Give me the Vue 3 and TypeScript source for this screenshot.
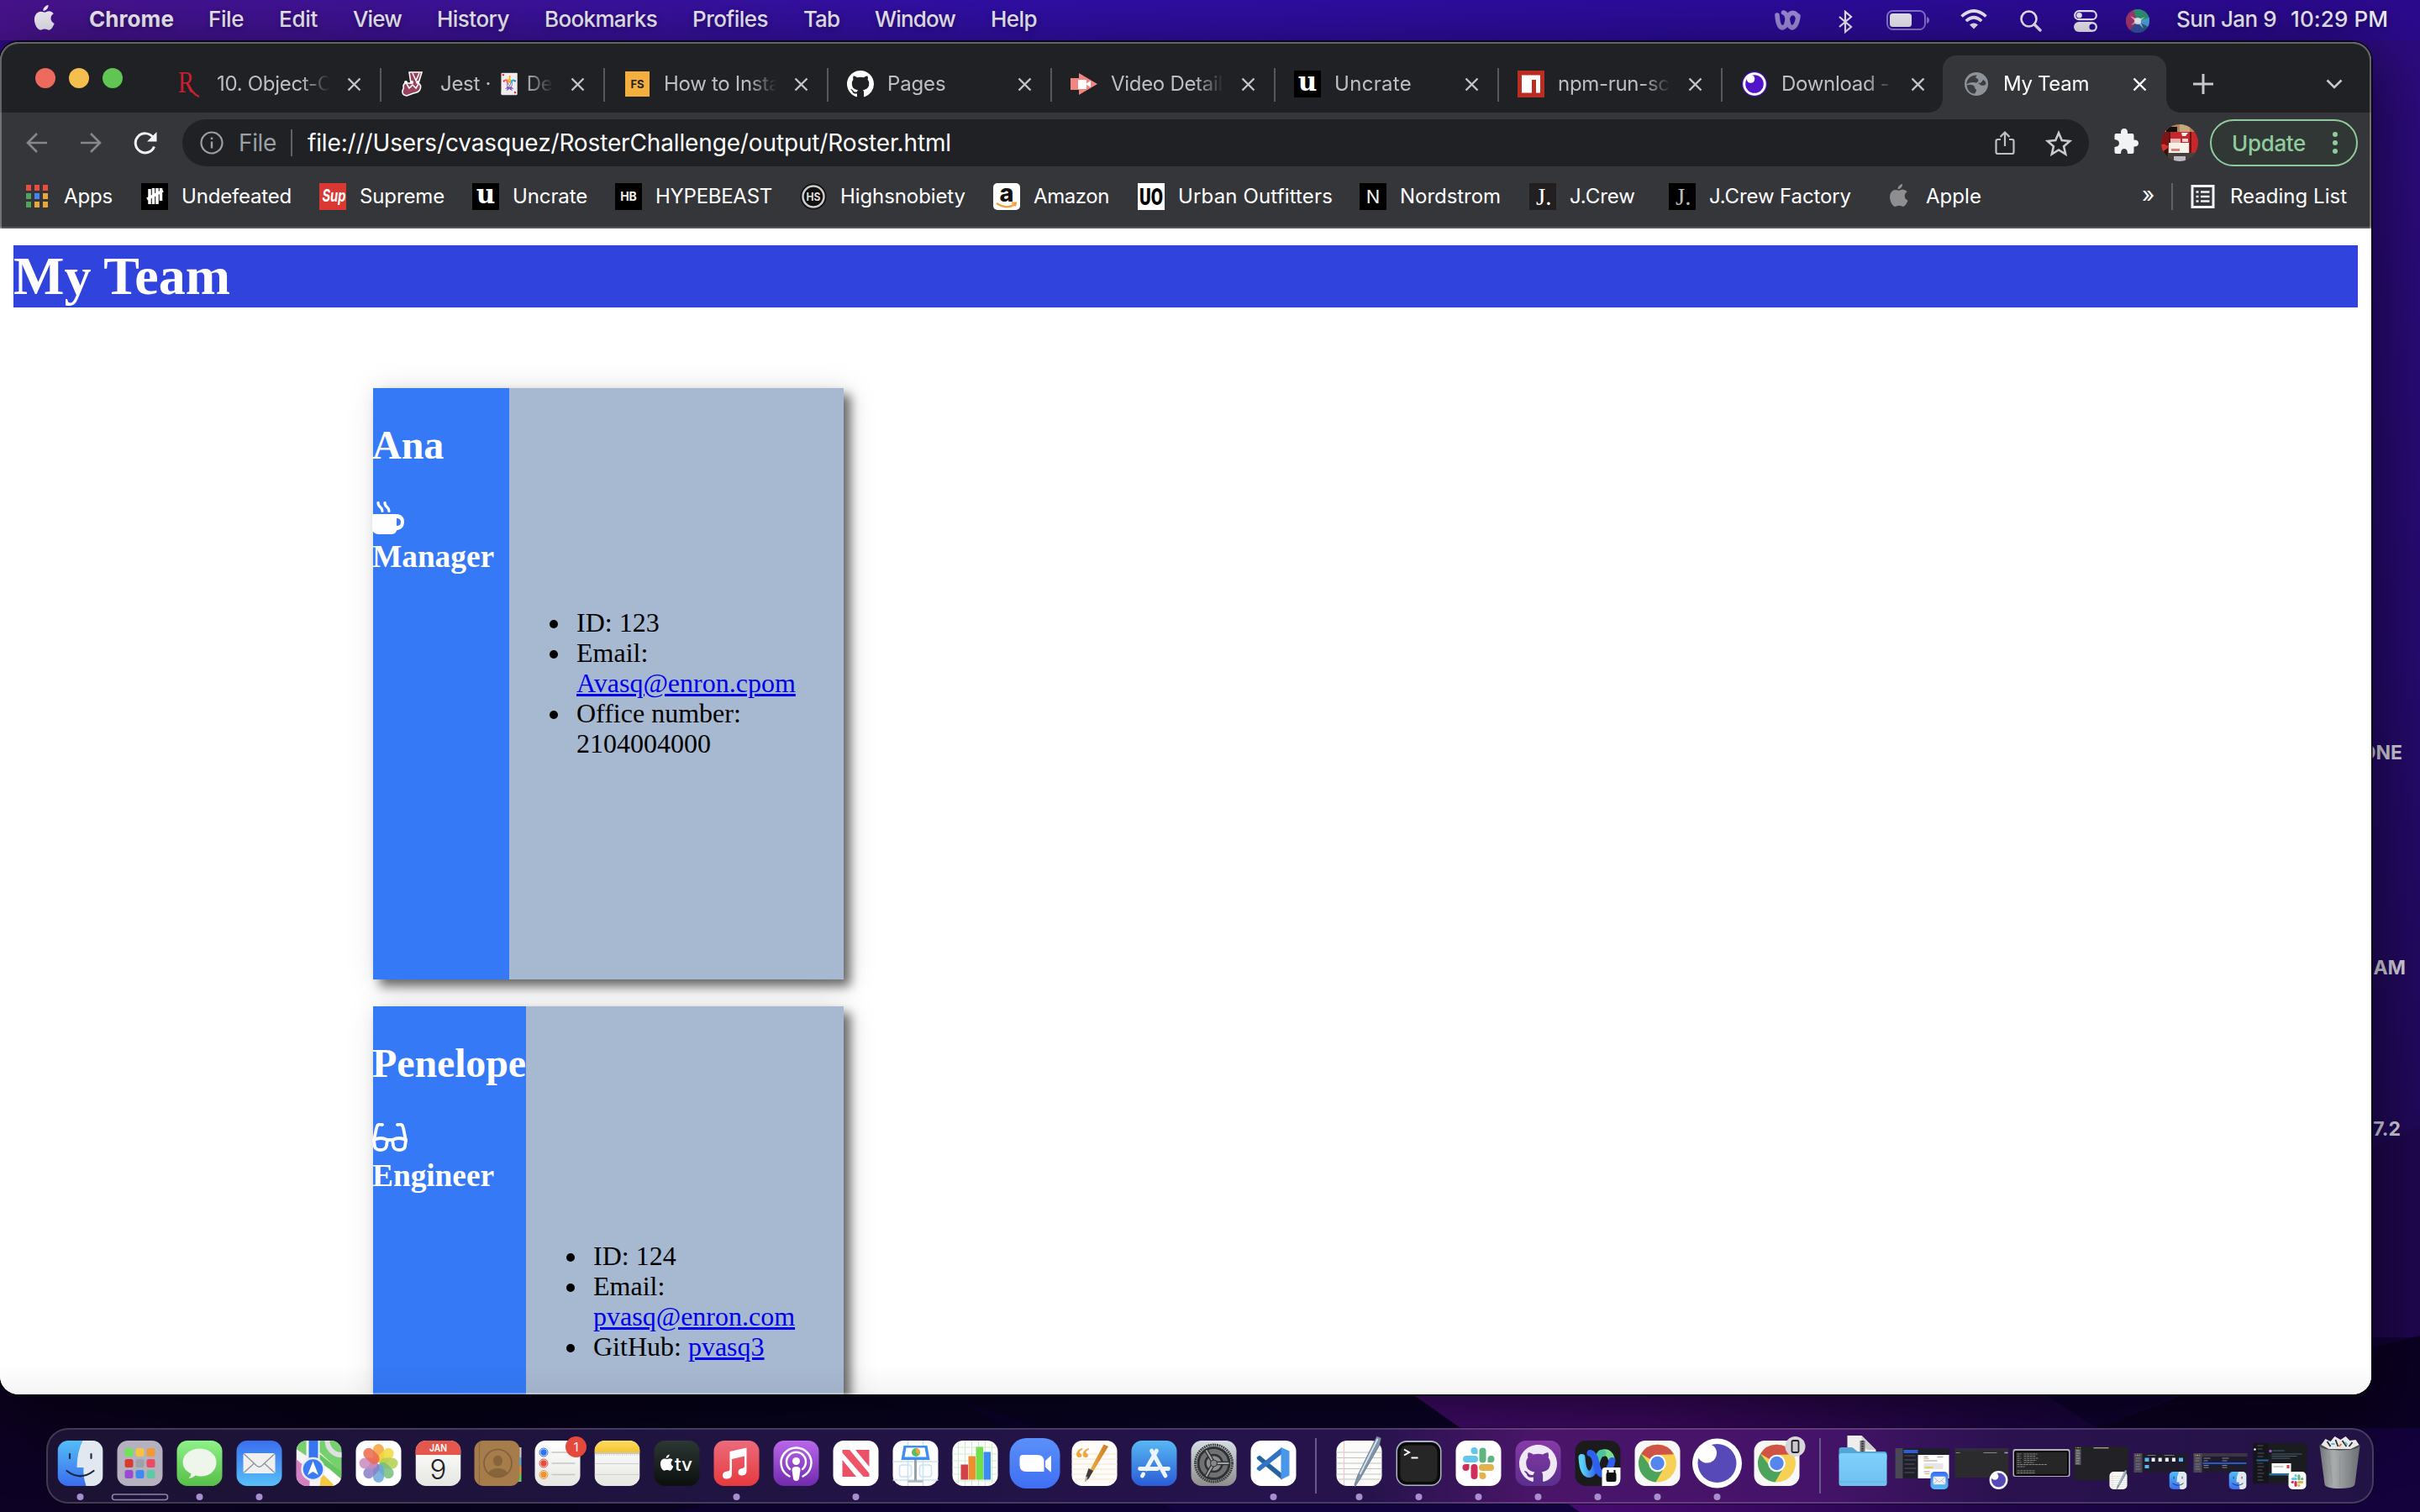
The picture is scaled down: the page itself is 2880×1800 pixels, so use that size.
<script setup lang="ts">
interface Label { text: string; width: number }
interface Tab { icon: string; title: string; width?: number; active?: boolean; last?: boolean }
interface Bookmark { icon: string; text: string; width: number; cell: number }
interface DockItem { icon?: string; dot?: boolean; separator?: boolean; tile?: boolean }
interface Glyph { text: string; attrs: Record<string, string | number> }

// Spreads the letters so that a label takes exactly the given width.
const vFit = {
  mounted(el: HTMLElement, binding: { value?: number }) {
    if (!binding.value) return
    const count = (el.textContent ?? '').length
    const natural = el.getBoundingClientRect().width
    el.style.letterSpacing = `${(binding.value - natural) / count}px`
  },
}

const menus: Label[] = [
  { text: 'File', width: 42 },
  { text: 'Edit', width: 46 },
  { text: 'View', width: 58 },
  { text: 'History', width: 86 },
  { text: 'Bookmarks', width: 134 },
  { text: 'Profiles', width: 90 },
  { text: 'Tab', width: 43 },
  { text: 'Window', width: 96 },
  { text: 'Help', width: 55 },
]

const tabs: Tab[] = [
  { icon: 'rutgers', title: '10. Object-Oriented' },
  { icon: 'jest', title: 'Jest · 🃏 Delightful' },
  { icon: 'fs', title: 'How to Install Node' },
  { icon: 'github', title: 'Pages', width: 68 },
  { icon: 'video', title: 'Video Details' },
  { icon: 'uncrate', title: 'Uncrate', width: 90 },
  { icon: 'npm', title: 'npm-run-script' },
  { icon: 'insomnia-tab', title: 'Download - Ins', last: true },
  { icon: 'globe', title: 'My Team', width: 100, active: true },
]

const bookmarks: Bookmark[] = [
  { icon: 'apps', text: 'Apps', width: 58, cell: 140 },
  { icon: 'undefeated', text: 'Undefeated', width: 131, cell: 212 },
  { icon: 'supreme', text: 'Supreme', width: 101, cell: 182 },
  { icon: 'uncrate', text: 'Uncrate', width: 89, cell: 170 },
  { icon: 'hypebeast', text: 'HYPEBEAST', width: 139, cell: 220 },
  { icon: 'highsnobiety', text: 'Highsnobiety', width: 149, cell: 230 },
  { icon: 'amazon', text: 'Amazon', width: 90, cell: 172 },
  { icon: 'urban', text: 'Urban Outfitters', width: 184, cell: 264 },
  { icon: 'nordstrom', text: 'Nordstrom', width: 120, cell: 202 },
  { icon: 'jcrew', text: 'J.Crew', width: 78, cell: 166 },
  { icon: 'jcrew-factory', text: 'J.Crew Factory', width: 169, cell: 258 },
  { icon: 'apple-mark', text: 'Apple', width: 66, cell: 305 },
]

const dock: DockItem[] = [
  { icon: 'finder', dot: true },
  { icon: 'launchpad' },
  { icon: 'messages', dot: true },
  { icon: 'mail', dot: true },
  { icon: 'maps' },
  { icon: 'photos' },
  { icon: 'calendar' },
  { icon: 'contacts' },
  { icon: 'reminders' },
  { icon: 'notes' },
  { icon: 'tv' },
  { icon: 'music', dot: true },
  { icon: 'podcasts' },
  { icon: 'news', dot: true },
  { icon: 'keynote' },
  { icon: 'numbers' },
  { icon: 'zoom' },
  { icon: 'pages' },
  { icon: 'appstore' },
  { icon: 'settings' },
  { icon: 'vscode', dot: true },
  { separator: true },
  { icon: 'textedit', dot: true },
  { icon: 'terminal', dot: true },
  { icon: 'slack', dot: true },
  { icon: 'github-desktop', dot: true },
  { icon: 'webex', dot: true },
  { icon: 'chrome', dot: true },
  { icon: 'insomnia', dot: true },
  { icon: 'chrome-device' },
  { separator: true },
  { icon: 'folder' },
  { icon: 'win-mail', tile: true },
  { icon: 'win-insomnia', tile: true },
  { icon: 'win-terminal', tile: true },
  { icon: 'win-textedit', tile: true },
  { icon: 'win-finder', tile: true },
  { icon: 'win-finder-list', tile: true },
  { icon: 'win-slack', tile: true },
  { icon: 'trash' },
]

// Lettering that sits on top of an icon, in the icon's own coordinates.
const mid = { 'text-anchor': 'middle' }
const sans = { 'font-family': 'Inter' }
const serif = { 'font-family': 'Liberation Serif' }
const stretch = { lengthAdjust: 'spacingAndGlyphs' }
const glyphs: Record<string, Glyph[]> = {
  rutgers: [{ text: 'R', attrs: { ...serif, ...stretch, x: 2, y: 26, 'font-size': 35, fill: '#c8202f', textLength: 19 } }],
  fs: [{ text: 'FS', attrs: { ...sans, ...mid, x: 16.5, y: 21, 'font-weight': 700, 'font-size': 13, fill: '#222' } }],
  uncrate: [{ text: 'u', attrs: { ...mid, 'font-family': 'DejaVu Serif', x: 16, y: 24, 'font-weight': 700, 'font-size': 31, fill: '#fff' } }],
  supreme: [{ text: 'Sup', attrs: { ...sans, ...stretch, x: 3.5, y: 22, 'font-style': 'italic', 'font-weight': 700, 'font-size': 20, fill: '#fff', textLength: 28 } }],
  hypebeast: [{ text: 'HB', attrs: { ...sans, ...mid, x: 16, y: 21, 'font-weight': 700, 'font-size': 14, fill: '#eee' } }],
  highsnobiety: [{ text: 'HS', attrs: { ...sans, ...mid, ...stretch, x: 16, y: 21, 'font-weight': 700, 'font-size': 13, fill: '#ddd', textLength: 17 } }],
  amazon: [{ text: 'a', attrs: { ...sans, ...mid, ...stretch, x: 16, y: 22, 'font-weight': 800, 'font-size': 29, fill: '#111', textLength: 17 } }],
  urban: [{ text: 'UO', attrs: { ...stretch, 'font-family': 'Roboto', x: 2, y: 26, 'font-weight': 900, 'font-size': 28, fill: '#000', textLength: 28 } }],
  nordstrom: [{ text: 'N', attrs: { ...sans, ...mid, x: 16, y: 24, 'font-size': 22, fill: '#eee' } }],
  jcrew: [{ text: 'J.', attrs: { ...serif, x: 8, y: 26, 'font-size': 29, fill: '#fff' } }],
  'jcrew-factory': [{ text: 'J.', attrs: { ...serif, x: 8, y: 26, 'font-size': 29, fill: '#bbb' } }],
  calendar: [
    { text: 'JAN', attrs: { ...sans, ...mid, ...stretch, x: 27, y: 13, 'font-weight': 600, 'font-size': 11.5, fill: '#fff', textLength: 21 } },
    { text: '9', attrs: { ...sans, ...mid, x: 27, y: 46, 'font-weight': 300, 'font-size': 33, fill: '#222' } },
  ],
  reminders: [{ text: '1', attrs: { ...sans, ...mid, x: 49, y: 12.5, 'font-size': 14, fill: '#fff' } }],
  tv: [{ text: 'tv', attrs: { ...sans, ...stretch, x: 24.5, y: 36, 'font-weight': 500, 'font-size': 22, fill: '#fff', textLength: 21 } }],
  pages: [{ text: '“', attrs: { ...serif, x: 4, y: 33, 'font-weight': 700, 'font-size': 35, fill: '#efa53c' } }],
}

const petals = ['#f4a43c', '#f2d93b', '#b4cf4e', '#76bf7c', '#6aa7dc', '#8b7fc6', '#c98ac0', '#ec6a4e']
const gridColors = ['#6fe35a', '#f6c344', '#ee9a3a', '#d93a30', '#9aa2aa', '#ec4a62', '#9a4bd4', '#3b8bf2', '#5cc9a7']
const fileRows = [0, 1, 2, 3, 4, 5]
</script>

<template>
  <svg class="paints" width="0" height="0" aria-hidden="true">
    <defs>
      <linearGradient id="gFinder" x2="0" y2="1"><stop stop-color="#53bdf6" /><stop offset="1" stop-color="#3a6df0" /></linearGradient>
      <linearGradient id="gGreen" x2="0" y2="1"><stop stop-color="#8df288" /><stop offset="1" stop-color="#57bf48" /></linearGradient>
      <linearGradient id="gMail" x2="0" y2="1"><stop stop-color="#3a6fee" /><stop offset="1" stop-color="#58bff8" /></linearGradient>
      <linearGradient id="gWhite" x2="0" y2="1"><stop stop-color="#fff" /><stop offset="1" stop-color="#e6e6e2" /></linearGradient>
      <linearGradient id="gMusic" x2="0" y2="1"><stop stop-color="#ec6b7d" /><stop offset="1" stop-color="#e63a3c" /></linearGradient>
      <linearGradient id="gPod" x2="0" y2="1"><stop stop-color="#ba67ea" /><stop offset="1" stop-color="#702aac" /></linearGradient>
      <linearGradient id="gZoom" x2="0" y2="1"><stop stop-color="#5a90fa" /><stop offset="1" stop-color="#3f6ff2" /></linearGradient>
      <linearGradient id="gStore" x2="0" y2="1"><stop stop-color="#57b8f3" /><stop offset="1" stop-color="#2a5bd6" /></linearGradient>
      <linearGradient id="gTv" x2="0" y2="1"><stop stop-color="#2c3733" /><stop offset="1" stop-color="#0b0f0e" /></linearGradient>
      <linearGradient id="gSet" x2="0" y2="1"><stop stop-color="#d5dfe5" /><stop offset="1" stop-color="#8d8d8b" /></linearGradient>
      <linearGradient id="gGh" x2="0" y2="1"><stop stop-color="#873aa6" /><stop offset="1" stop-color="#5a2f8c" /></linearGradient>
      <linearGradient id="gFolder" x2="0" y2="1"><stop stop-color="#7fd0fb" /><stop offset="1" stop-color="#6fc0f0" /></linearGradient>
      <linearGradient id="gTrash"><stop stop-color="#6f7476" /><stop offset=".35" stop-color="#a9adae" /><stop offset="1" stop-color="#6a6e72" /></linearGradient>
      <linearGradient id="gYellow" x2="0" y2="1"><stop stop-color="#fbdc62" /><stop offset="1" stop-color="#f6c431" /></linearGradient>
      <linearGradient id="gPencil"><stop stop-color="#f3b44a" /><stop offset="1" stop-color="#c97a22" /></linearGradient>
      <linearGradient id="gWebex"><stop stop-color="#5bd3f4" /><stop offset="1" stop-color="#2f62ee" /></linearGradient>
      <clipPath id="cIcon"><rect width="54" height="54" rx="12.500" /></clipPath>
      <clipPath id="cAvatar"><circle cx="22" cy="22" r="22" /></clipPath>
      <clipPath id="cSiri"><circle cx="14" cy="14" r="14" /></clipPath>
    </defs>
  </svg>

  <svg class="sprite" aria-hidden="true">
    <symbol id="apple" viewBox="0 0 24 30">
      <path d="M16.4 0c.3 3.2-2.5 6.900-5.900 6.700C10.100 3.600 13.100.4 16.400 0zM12.300 8.400c1 0 2.800-1.400 5-1.300 1.700.1 3.800.9 5.100 2.900-4.700 3-3.900 9.300.9 11.200-.9 2.500-3.500 7.600-6.300 7.600-1.900 0-2.600-1.100-4.800-1.100-2.200 0-3 1.100-4.800 1.100C4 28.900.3 22.600.3 16.800c0-5.900 3.700-9.300 7.300-9.300 2.100 0 3.800.9 4.700.9z" />
    </symbol>
    <symbol id="octocat" viewBox="0 0 16 16">
      <path d="M8 0C3.580 0 0 3.580 0 8c0 3.540 2.290 6.530 5.470 7.590.4.070.550-.170.550-.380 0-.190-.010-.820-.010-1.490-2.010.370-2.530-.490-2.690-.940-.090-.230-.480-.940-.820-1.130-.280-.150-.680-.520-.010-.530.630-.010 1.080.580 1.230.820.720 1.210 1.870.870 2.330.660.070-.520.280-.870.510-1.070-1.780-.200-3.640-.890-3.640-3.950 0-.870.310-1.590.820-2.150-.080-.200-.360-1.020.080-2.120 0 0 .670-.210 2.200.820.640-.180 1.320-.270 2-.270s1.360.090 2 .270c1.530-1.040 2.200-.820 2.200-.820.440 1.100.160 1.920.080 2.120.510.560.820 1.270.820 2.150 0 3.070-1.870 3.750-3.650 3.950.290.250.540.730.540 1.480 0 1.070-.010 1.930-.010 2.200 0 .210.150.460.550.380A8.010 8.010 0 0 0 16 8c0-4.420-3.580-8-8-8z" />
    </symbol>

    <!-- favicons, 32 x 32 -->
    <symbol id="rutgers" viewBox="0 0 32 32"><path d="M14 16q5 12 13 15" stroke="#c8202f" stroke-width="2.200" fill="none" /></symbol>
    <symbol id="jest" viewBox="0 0 32 32"><path d="M11 2h15l-4 13q4 3 2 7-1 4-8 5l-8 3q-6-1-5-6 2-3 1-6 1-4 5-3l4 0z" fill="#99425b" stroke="#fff" stroke-width="1.600" /><path d="M15 3l4 9 4-9M8 16l3 5 4-4 4 4 3-5" fill="none" stroke="#fff" stroke-width="1.500" /><g fill="#fff"><circle cx="7" cy="14" r="2" /><circle cx="14" cy="14" r="2" /><circle cx="21" cy="14" r="2" /></g></symbol>
    <symbol id="fs" viewBox="0 0 32 32"><rect x="2" y="1" width="29" height="30" fill="#f3ae3d" /></symbol>
    <symbol id="github" viewBox="0 0 32 32"><use href="#octocat" width="32" height="32" fill="#fff" /></symbol>
    <symbol id="video" viewBox="0 0 32 32"><path d="M0 9h10V3l22 13-22 13v-6H0z" fill="#f08582" /><rect x="9" y="11" width="10" height="11" fill="#fff" /><path d="M18 16l6-4v8z" fill="#fff" /></symbol>
    <symbol id="uncrate" viewBox="0 0 32 32"><rect width="32" height="32" fill="#000" /></symbol>
    <symbol id="npm" viewBox="0 0 32 32"><rect width="32" height="32" fill="#bb2d22" /><path d="M5 5.500h22v21h-5v-15.500h-5v15.500H5z" fill="#fff" /></symbol>
    <symbol id="insomnia-tab" viewBox="0 0 32 32"><circle cx="16" cy="16" r="15" fill="#4a12c9" /><circle cx="16" cy="16" r="13.800" fill="#fff" /><circle cx="16" cy="16" r="10.800" fill="#5214c8" /><circle cx="11.500" cy="10" r="4.800" fill="#fff" /></symbol>
    <symbol id="globe" viewBox="0 0 32 32"><circle cx="16" cy="16" r="14" fill="#8d9398" /><path d="M17 5.500c-3 2-1.500 4 1 4.500 1 2 0 4-2 4.500-4-1-8-1-11.500 2C4 11 9 5 17 5.500zM4.600 17.500c4-1.500 9-.5 9.400 2.500 0 2 2.500 2 2 4-.5 1.500-1.500 2-1.500 3.500C9 28 5 23 4.600 17.500zM27.500 16c-2 2.500-6 2.500-8-.2l-2-.8 4-.5c1-.5 1-2.500 3-3.500 2 1.500 3 3 3 5z" fill="#3c3d41" /></symbol>
    <symbol id="apps" viewBox="0 0 32 32"><rect x="3" y="2" width="6" height="7" fill="#ea4d3d" /><rect x="13" y="2" width="6" height="7" fill="#ea4d3d" /><rect x="23" y="2" width="6" height="7" fill="#ea4d3d" /><rect x="3" y="12" width="6" height="7" fill="#4fa35b" /><rect x="13" y="12" width="6" height="7" fill="#4385f3" /><rect x="23" y="12" width="6" height="7" fill="#eaa637" /><rect x="3" y="22" width="6" height="7" fill="#4fa35b" /><rect x="13" y="22" width="6" height="7" fill="#eaa637" /><rect x="23" y="22" width="6" height="7" fill="#eaa637" /></symbol>
    <symbol id="undefeated" viewBox="0 0 32 32"><rect width="32" height="32" fill="#000" /><path d="M10 7v18M14.500 6v19M19 6v19M23.500 6v15M7 19L26 9" stroke="#fff" stroke-width="3.500" /></symbol>
    <symbol id="supreme" viewBox="0 0 32 32"><rect width="32" height="32" fill="#da3832" /></symbol>
    <symbol id="hypebeast" viewBox="0 0 32 32"><rect width="32" height="32" fill="#000" /></symbol>
    <symbol id="highsnobiety" viewBox="0 0 32 32"><circle cx="16" cy="16" r="15.500" fill="#111" /><circle cx="16" cy="16" r="12.500" fill="#111" stroke="#ccc" stroke-width="2.500" /></symbol>
    <symbol id="amazon" viewBox="0 0 32 32"><rect width="32" height="32" rx="5" fill="#fff" /><path d="M4 24q12 8 22 1M22 23.500l5 0-1 4" fill="none" stroke="#f3a13b" stroke-width="2.200" /></symbol>
    <symbol id="urban" viewBox="0 0 32 32"><rect width="32" height="32" fill="#fff" /></symbol>
    <symbol id="nordstrom" viewBox="0 0 32 32"><rect width="32" height="32" fill="#000" /></symbol>
    <symbol id="jcrew" viewBox="0 0 32 32"><rect width="32" height="32" fill="#221f20" /></symbol>
    <symbol id="jcrew-factory" viewBox="0 0 32 32"><rect width="32" height="32" fill="#000" /></symbol>
    <symbol id="apple-mark" viewBox="0 0 32 32"><use href="#apple" x="4" y="1" width="24" height="28" fill="#8e8e90" /></symbol>

    <!-- dock icons, 54 x 54 -->
    <symbol id="finder" viewBox="0 0 54 54"><g clip-path="url(#cIcon)"><rect width="54" height="54" fill="url(#gFinder)" /><path d="M30 0q-7 14-7 32h8q-1 10 3 22h20V0z" fill="#e2e8f0" /></g><path d="M14.500 16v5M40 16v5" stroke="#20304a" stroke-width="2.200" stroke-linecap="round" /><path d="M11 36q16 12.500 32 0" fill="none" stroke="#1b2740" stroke-width="2.200" stroke-linecap="round" /></symbol>
    <symbol id="launchpad" viewBox="0 0 54 54"><rect width="54" height="54" rx="12.500" fill="#b5b1bf" /><rect v-for="(c, i) in gridColors" :key="c" :x="9 + (i % 3) * 13" :y="9 + Math.floor(i / 3) * 13" width="10" height="10" rx="2.500" :fill="c" /></symbol>
    <symbol id="messages" viewBox="0 0 54 54"><rect width="54" height="54" rx="12.500" fill="url(#gGreen)" /><path d="M27 9.500c11 0 20 7 20 16.500s-8 16.500-18 16.500c-3 0-5-.5-7-1q-3 3-8 3.500 3-2.500 3-5.500Q7 34.500 7 26C7 16.500 16 9.500 27 9.500z" fill="#eef6ec" /></symbol>
    <symbol id="mail" viewBox="0 0 54 54"><rect width="54" height="54" rx="12.500" fill="url(#gMail)" /><rect x="8" y="15" width="38" height="24" rx="2.500" fill="#f0f0f0" /><path d="M9 16l15 14q3 2.500 6 0l15-14M9 38l12-11M45 38L33 27" fill="none" stroke="#8d9196" stroke-width="1.300" /></symbol>
    <symbol id="maps" viewBox="0 0 54 54"><g clip-path="url(#cIcon)"><rect width="54" height="54" fill="#f4f4f4" /><path d="M0 0h12v18L0 10zM28 0h26v38L28 14z" fill="#77d06e" /><path d="M0 22l16 14v18H0z" fill="#d680c4" /><path d="M28 24l26 24v6H28z" fill="#fff" /><path d="M30 38l16 16H28z" fill="#f4c83f" /><path d="M40 34l14 12v-9L28 16v10z" fill="#66c65f" /><rect x="15" width="11" height="30" fill="#3575ef" /><circle cx="54" cy="0" r="17" fill="none" stroke="#dfe0e2" stroke-width="6" /></g><circle cx="20" cy="34" r="13" fill="#3b7bf5" stroke="#e9ecf3" stroke-width="2.500" /><path d="M20 24.500l6.500 16.500-6.500-4-6.500 4z" fill="#fff" /></symbol>
    <symbol id="photos" viewBox="0 0 54 54"><rect width="54" height="54" rx="12.500" fill="#fff" /><rect v-for="(c, i) in petals" :key="c" x="20.500" y="4" width="13" height="22" rx="6.500" :fill="c" fill-opacity=".86" :transform="`rotate(${i * 45} 27 27)`" /></symbol>
    <symbol id="calendar" viewBox="0 0 54 54"><g clip-path="url(#cIcon)"><rect width="54" height="54" fill="url(#gWhite)" /><rect width="54" height="17" fill="#e4574c" /></g></symbol>
    <symbol id="contacts" viewBox="0 0 54 54"><rect x="49" y="8" width="6" height="12" fill="#c7c7c7" /><rect x="49" y="20" width="6" height="10" fill="#4ba9e6" /><rect x="49" y="30" width="6" height="9" fill="#ef8d2e" /><rect x="49" y="39" width="6" height="10" fill="#64c85a" /><rect x="-1" width="54" height="54" rx="11" fill="#a67c4b" /><path d="M5 1v52" stroke="#8f683b" stroke-width="1.200" /><circle cx="27" cy="27" r="16.500" fill="none" stroke="#84603a" stroke-width="1.700" /><ellipse cx="27" cy="24" rx="5.500" ry="6.500" fill="#88643b" /><path d="M15.500 38.500q3-5.500 11.500-5.500t11.500 5.500Q34 43.500 27 43.500t-11.500-5z" fill="#88643b" /></symbol>
    <symbol id="reminders" viewBox="0 0 54 54"><rect width="54" height="54" rx="12.500" fill="url(#gWhite)" /><path d="M20 14h28M20 27h28M20 40.500h28" stroke="#c6c6c6" stroke-width="1.300" /><circle cx="10.500" cy="14" r="3.700" fill="#2f72ea" /><circle cx="10.500" cy="27" r="3.700" fill="#e34b40" /><circle cx="10.500" cy="40.500" r="3.700" fill="#ee9331" /><g fill="none" stroke-width="1"><circle cx="10.500" cy="14" r="5" stroke="#2f72ea" /><circle cx="10.500" cy="27" r="5" stroke="#e34b40" /><circle cx="10.500" cy="40.500" r="5" stroke="#ee9331" /></g><circle cx="49" cy="7.500" r="12.500" fill="#e5493b" /></symbol>
    <symbol id="notes" viewBox="0 0 54 54"><g clip-path="url(#cIcon)"><rect width="54" height="54" fill="url(#gWhite)" /><rect width="54" height="14" fill="url(#gYellow)" /><path d="M0 15h54" stroke="#9a9a8e" stroke-width="1.200" /><path d="M0 17h54" stroke="#bbb" stroke-width="1.200" stroke-dasharray="1 1.500" /><path d="M0 27.500h54M0 40.500h54" stroke="#cfcfcb" stroke-width="1.200" /></g></symbol>
    <symbol id="tv" viewBox="0 0 54 54"><rect width="54" height="54" rx="12.500" fill="url(#gTv)" /><use href="#apple" x="7" y="16.500" width="16.500" height="20" fill="#fff" /></symbol>
    <symbol id="music" viewBox="0 0 54 54"><rect width="54" height="54" rx="12.500" fill="url(#gMusic)" /><path d="M19 13l20-4.500V36q0 5-5 5.500t-5-4q0-4 5-4.500 2.500-.5 2.500-2V18.500l-15 3.500v18q0 5-5.500 5.500t-5.500-4q0-4.500 5.500-5 3-.5 3-2.500z" fill="#fff" /></symbol>
    <symbol id="podcasts" viewBox="0 0 54 54"><rect width="54" height="54" rx="12.500" fill="url(#gPod)" /><g fill="none" stroke="#fff" stroke-width="2.500" stroke-linecap="round"><path d="M19 42.500a18 18 0 1 1 16 0" /><path d="M19.500 34a11.500 11.500 0 1 1 15 0" /></g><circle cx="27" cy="24.500" r="4.500" fill="#fff" /><path d="M27 31q5 0 5 4l-1.500 10q-.5 3-3.500 3t-3.500-3L22 35q0-4 5-4z" fill="#fff" /></symbol>
    <symbol id="news" viewBox="0 0 54 54"><rect width="54" height="54" rx="12.500" fill="#fff" /><path d="M26.500 11H43v20zM11 23v20h16.500z" fill="#ea5066" /><path d="M11 11h8.500L43 39v4h-7L11 14.500z" fill="#ee5568" /></symbol>
    <symbol id="keynote" viewBox="0 0 54 54"><rect width="54" height="54" rx="12.500" fill="#fdfdfd" /><g fill="none" stroke="#cbe2f2" stroke-width="1.500"><rect x="8" y="29" width="14" height="14" rx="3" /><rect x="32" y="29" width="14" height="14" rx="3" /><path d="M0 25h54M0 47h54M18 0v54M36 0v54" /></g><path d="M13 6h28l3 17H10z" fill="#3d8df2" /><path d="M16 8.500h22l2 11H14z" fill="#fff" /><circle cx="27.500" cy="14" r="5" fill="#5bbf5f" /><path d="M27.500 14V9a5 5 0 0 1 4 8z" fill="#f1a33c" /><path d="M27 23v25" stroke="#98a0a8" stroke-width="3" /><path d="M18 48.500h18" stroke="#b2b7bc" stroke-width="2.500" /></symbol>
    <symbol id="numbers" viewBox="0 0 54 54"><rect width="54" height="54" rx="12.500" fill="#fff" /><path d="M7 3v48M15 0v54M23 0v54M31 0v54M39 0v54M47 3v48M3 8h48M0 16h54M0 24h54M0 32h54M0 40h54M3 48h48" stroke="#cfeccb" stroke-width="1.200" /><rect x="10" y="28.500" width="8.500" height="18" fill="#d2404a" /><rect x="19" y="18.500" width="8.500" height="28" fill="#ee8e31" /><rect x="28" y="7.500" width="8.500" height="39" fill="#6fe04b" /><rect x="37" y="13.500" width="8.500" height="33" fill="#3a8bf2" /></symbol>
    <symbol id="zoom" viewBox="0 0 54 54"><rect x="-3" y="-3" width="60" height="60" rx="20" fill="url(#gZoom)" /><path d="M12 17h17q8 0 8 8v12H16q-8 0-8-8v-8q0-4 4-4z" fill="#fff" transform="translate(1)" /><path d="M40 24l6-5.500v18.500l-6-5.500z" fill="#fff" stroke="#fff" stroke-linejoin="round" /></symbol>
    <symbol id="pages" viewBox="0 0 54 54"><rect width="54" height="54" rx="12.500" fill="#fefdfb" /><path d="M0 16h54M0 22h54M0 28h54M0 34h54M0 40h54M3 46h48" stroke="#f7e3c4" stroke-width="1" /><path d="M38 4.500l5.500 2.500L24 39l-5 1z" fill="url(#gPencil)" /><path d="M20 33l5.500 3-5 9-5 4 1.500-7z" fill="#3d3b3c" /><path d="M18 43l-2 6" stroke="#bbb" stroke-width="2" /></symbol>
    <symbol id="appstore" viewBox="0 0 54 54"><rect width="54" height="54" rx="12.500" fill="url(#gStore)" /><g stroke="#eef5fd" stroke-width="4.800" stroke-linecap="round"><path d="M30 12L17.500 34M24 12l16.500 30M10 33.500h21M38 33.500h6M14 40l-1 2" /></g></symbol>
    <symbol id="settings" viewBox="0 0 54 54"><rect width="54" height="54" rx="12.500" fill="url(#gSet)" /><circle cx="27" cy="27" r="22" fill="none" stroke="#3b3d3f" stroke-width="3" stroke-dasharray="1.800 .8" /><circle cx="27" cy="27" r="18.500" fill="#6f7173" stroke="#2f3133" stroke-width="3" /><circle cx="27" cy="27" r="10" fill="#8d8f91" stroke="#2f3133" stroke-width="2.500" /><path d="M27 27h18M27 27l-9-15.500M27 27l-9 15.500" stroke="#2f3133" stroke-width="4.600" /><path d="M27 27h18M27 27l-9-15.500M27 27l-9 15.500" stroke="#a2a4a6" stroke-width="2" /><circle cx="27" cy="27" r="4" fill="#85878a" stroke="#2f3133" /></symbol>
    <symbol id="vscode" viewBox="0 0 54 54"><rect width="54" height="54" rx="12.500" fill="#fff" /><path d="M7 20l3.500-2.500L37 39v7.500L7.500 22z" fill="#2562a0" /><path d="M7 34l3.500 2.500L37 16V8L7.500 32z" fill="#3273c4" /><path d="M36 8l10 4.500v29L36 46.500z" fill="#4a96e8" /></symbol>
    <symbol id="textedit" viewBox="0 0 54 54"><rect width="54" height="54" rx="12.500" fill="#fbfbf9" /><path d="M0 14h54M0 20.500h54M0 27h54M0 33.500h54M0 40h54M2 46h50" stroke="#c3c3c3" stroke-width="1.200" /><path d="M9 1v52" stroke="#f0c9c4" stroke-width="1.200" /><path d="M48-5l5 2-2 9L28 46l-6 9-.5-3L25 42z" fill="#7f93a8" stroke="#56636f" stroke-width=".6" /><path d="M49-2L28 40" stroke="#d4e2ee" stroke-width="1.800" /></symbol>
    <symbol id="terminal" viewBox="0 0 54 54"><rect width="54" height="54" rx="12.500" fill="#a9b6c2" /><rect x="1.500" y="2" width="51" height="50.500" rx="11" fill="#0a0a0a" /><rect x="5" y="5.500" width="44" height="43.500" rx="8" fill="#262626" /><path d="M9.500 10.500l6 3.500-6 3.500" fill="none" stroke="#fff" stroke-width="2" /><path d="M18 20.500h8" stroke="#fff" stroke-width="2" /></symbol>
    <symbol id="slack" viewBox="0 0 54 54"><rect width="54" height="54" rx="12.500" fill="#fff" /><g stroke-width="8" stroke-linecap="round"><path d="M12.500 22h10" stroke="#63c6ec" /><path d="M32 12.500v10" stroke="#5fb57f" /><path d="M31.500 32h10" stroke="#e3b34b" /><path d="M22 32v10" stroke="#cf2d5a" /></g><path d="M26 16v-4a4 4 0 1 0-4 4z" fill="#63c6ec" /><path d="M38 26h4a4 4 0 1 0-4-4z" fill="#5fb57f" /><path d="M28 38v4a4 4 0 1 0 4-4z" fill="#e3b34b" /><path d="M16 28h-4a4 4 0 1 0 4 4z" fill="#cf2d5a" /></symbol>
    <symbol id="github-desktop" viewBox="0 0 54 54"><rect width="54" height="54" rx="12.500" fill="url(#gGh)" /><use href="#octocat" x="4.500" y="5" width="45" height="45" fill="#efe9f5" /></symbol>
    <symbol id="webex" viewBox="0 0 54 54"><rect width="54" height="54" rx="12.500" fill="#1b1b1c" /><g fill="none" stroke-width="8" stroke-linecap="round"><path d="M31 15q9-3 12 6" stroke="#7ddf8c" /><path d="M25 27q3-12 8-12" stroke="#4cc4a0" /><path d="M8 20q1 20 9 20 6-1 8-13" stroke="url(#gWebex)" /><path d="M18 15q5 1 7 12 2 12 8 13 8-2 11-16" stroke="#2f5ff0" /></g><path d="M32 36q0-4 4-4h18v13q0 9-9 9H32z" fill="#fff" /><rect x="37" y="38" width="12" height="11" rx="2" fill="#111" /><path d="M39 35v4M47 35v4" stroke="#111" stroke-width="2" /></symbol>
    <symbol id="chrome" viewBox="0 0 54 54"><rect width="54" height="54" rx="12.500" fill="#f8f8f8" /><circle cx="27" cy="27" r="22.500" fill="#f7d155" /><path d="M27 27L7.500 15.800A22.500 22.500 0 0 1 46.500 16.200L27 17z" fill="#cf5445" /><path d="M7.500 15.800A22.500 22.500 0 0 0 25 49.400L35 32l-16-1z" fill="#4ba45c" /><circle cx="27" cy="27" r="10.300" fill="#fff" /><circle cx="27" cy="27" r="8.200" fill="#5486ee" /></symbol>
    <symbol id="insomnia" viewBox="0 0 54 54"><circle cx="27" cy="27" r="29.500" fill="#fff" /><circle cx="27" cy="27" r="23" fill="#5849b8" /><circle cx="15" cy="15" r="11.500" fill="#fff" /></symbol>
    <symbol id="chrome-device" viewBox="0 0 54 54"><use href="#chrome" width="54" height="54" /><circle cx="49" cy="7" r="12" fill="#d8d4dc" /><rect x="45" y="0" width="8" height="14" rx="1.500" fill="#c9c6cd" stroke="#222" stroke-width="1.800" /></symbol>
    <symbol id="folder" viewBox="0 0 54 54"><path d="M9-6h17l17 17v15H9z" fill="#eee" /><path d="M26-6v8q0 5 8 9h9z" fill="#cfcfcf" /><rect x="24" y="0" width="6" height="14" fill="#777" /><path d="M27 0v14" stroke="#222" stroke-width="2" stroke-dasharray="1.500 1.500" /><path d="M-1 11q0-3 3-3h12q2 0 4 2.500l3 2.500h32q3 0 3 3v6H-1z" fill="#56a5d8" /><rect x="-1" y="15" width="57" height="39" rx="3" fill="url(#gFolder)" /><path d="M-1 49h57" stroke="#5fb0e0" /></symbol>
    <symbol id="trash" viewBox="0 0 54 54"><path d="M3 6q24 7 48 0l-6 46q-1 5-18 5T9 52z" fill="url(#gTrash)" /><ellipse cx="27" cy="6" rx="24" ry="5.500" fill="#4a4c4e" /><path d="M5 5l5-7 6 3 5-6 7 4 6-4 5 5 7-1 4 6-10 5H14z" fill="#e9e9e9" /><path d="M12 1l4 6M22-1l3 8M30 0l5 7M42 2l-4 5" stroke="#2a2a2a" stroke-width="1.800" /><path d="M17 4l4 0M33 2l3 3" stroke="#5ab7dc" stroke-width="2" /><path d="M26 7l3-3" stroke="#e87b3b" stroke-width="2" /><path d="M14 16l4 36M27 18v36M40 16l-4 36" stroke="#888d90" stroke-width="1.300" opacity=".5" /></symbol>

    <!-- minimized windows, 72 x 90 -->
    <symbol id="win-mail" viewBox="0 0 72 90"><rect x="4" y="24" width="64" height="36" fill="#1f1f2a" /><rect x="4" y="24" width="9" height="36" fill="#4a4854" /><rect x="14" y="26" width="17" height="4" fill="#2d5fcc" /><path d="M15 33h13M15 38h14M15 43h12M15 48h14M15 53h12" stroke="#44434f" stroke-width="1.500" /><rect x="31" y="32" width="37" height="28" fill="#fff" /><rect x="38" y="42" width="23" height="7" fill="#e5e5e5" /><rect x="39" y="46" width="10" height="2" fill="#e8cf63" /><path d="M38 34.500h5M54 34.500h7M38 39h16M38 52h7" stroke="#999" stroke-width="1" /><path d="M38 36.500h6M39 54.500h6" stroke="#f1a66a" stroke-width="1" /><use href="#mail" x="46" y="52" width="21" height="21" /></symbol>
    <symbol id="win-insomnia" viewBox="0 0 72 90"><rect x="4" y="24" width="64" height="35" fill="#2b2b2d" /><rect x="4" y="24" width="64" height="4" fill="#302d3a" /><path d="M5 29.500h5M38 29.500h16" stroke="#888" /><path d="M63 29.500h4" stroke="#a99be8" stroke-width="1.500" /><use href="#insomnia" x="46" y="52" width="20" height="20" /></symbol>
    <symbol id="win-terminal" viewBox="0 0 72 90"><rect x="2" y="25" width="68" height="33" rx="2.500" fill="#b4aebb" /><rect x="3.500" y="27" width="65" height="30" rx="2" fill="#090909" /><rect x="5.500" y="29" width="61" height="26" fill="#262626" /><path d="M7 31h5M15 31h16M7 33.500h4M15 33.500h14M7 36h5M15 36h17M7 38.500h4M15 38.500h15M7 41h5M15 41h12M7 43.500h36M7 46h9M7 51h21M7 53.500h21" stroke="#858585" stroke-width="1" stroke-dasharray="3 .6" /></symbol>
    <symbol id="win-textedit" viewBox="0 0 72 90"><rect x="4" y="22" width="64" height="40" fill="#222226" /><rect x="5" y="25" width="7" height="19" fill="#55555a" /><path d="M6 27h4M6 30h5M6 33h4M6 36h5M6 39h4M6 42h4" stroke="#aaa" /><path d="M27 23.800h18" stroke="#ccc" stroke-width="1" /><circle cx="6" cy="23.500" r=".8" fill="#e5564c" /><circle cx="8.500" cy="23.500" r=".8" fill="#efb93e" /><circle cx="11" cy="23.500" r=".8" fill="#58c044" /><use href="#textedit" x="46" y="52" width="21" height="21" /></symbol>
    <symbol id="win-finder" viewBox="0 0 72 90"><rect x="4" y="30" width="64" height="23" rx="1" fill="#201b2c" /><rect x="4" y="30" width="10" height="23" fill="#4c4757" /><path d="M6 36h6M6 39h5M6 43h6M6 46h5M6 49h6" stroke="#7e7a89" /><path d="M20 32.500h10M40 32.500h12" stroke="#77737f" /><rect v-for="n in fileRows" :key="n" :x="17 + n * 8.1" y="35.500" :width="n === 0 || n === 5 ? 5 : 4" height="4.500" :fill="n === 0 || n === 5 ? '#5bb8ee' : '#f0f0f0'" /><rect x="17" y="44" width="5" height="4" fill="#5bb8ee" /><circle cx="6" cy="32.500" r=".8" fill="#e5564c" /><circle cx="8.500" cy="32.500" r=".8" fill="#efb93e" /><circle cx="11" cy="32.500" r=".8" fill="#58c044" /><use href="#finder" x="46" y="52" width="21" height="21" /></symbol>
    <symbol id="win-finder-list" viewBox="0 0 72 90"><rect x="4" y="30" width="64" height="23" rx="1" fill="#201b2c" /><rect x="4" y="30" width="64" height="4" fill="#3a3645" /><rect x="4" y="30" width="10" height="23" fill="#4c4757" /><path d="M6 36h6M6 39h5M6 43h6M6 46h5M6 49h6" stroke="#7e7a89" /><path d="M16 36h8M38 36h8M16 39h5M38 39h6M16 44.500h6M38 44.500h6M16 47h6M38 47h6" stroke="#8d8996" /><rect x="15" y="41" width="52" height="2" fill="#2759c7" /><circle cx="6" cy="32.500" r=".8" fill="#e5564c" /><circle cx="8.500" cy="32.500" r=".8" fill="#efb93e" /><circle cx="11" cy="32.500" r=".8" fill="#58c044" /><use href="#finder" x="46" y="52" width="21" height="21" /></symbol>
    <symbol id="win-slack" viewBox="0 0 72 90"><rect x="4" y="18" width="64" height="48" fill="#1b1c20" /><rect x="4" y="18" width="18" height="48" fill="#15151b" /><path d="M9 21h7M9 25h6M9 30h8M9 34h7M9 42h7M9 46h8M9 50h6M9 54h8M9 58h6M9 62h7" stroke="#555560" /><rect x="8" y="37.500" width="14" height="2" fill="#2468a8" /><circle cx="6" cy="25.500" r="1.300" fill="#f2f2f2" /><rect x="23" y="26" width="3" height="3" fill="#9a58c8" /><path d="M27 27h14M26 31h36M26 33.500h30M26 36h22" stroke="#47606e" /><rect x="26" y="42" width="23" height="12" fill="#fff" /><rect x="44" y="44" width="3" height="4" fill="#d93b4b" /><path d="M28 46h12" stroke="#999" /><rect x="23" y="54" width="24" height="2.500" fill="#2870a0" /><use href="#slack" x="46" y="52" width="21" height="21" /></symbol>
  </svg>

  <div class="desktop">
    <svg class="wallpaper" viewBox="0 0 2880 1800" aria-hidden="true">
      <defs>
        <linearGradient id="wTop"><stop stop-color="#47138c" /><stop offset=".2" stop-color="#3c129a" /><stop offset=".4" stop-color="#310fa6" /><stop offset=".7" stop-color="#2c0c9c" /><stop offset="1" stop-color="#2b0a8c" /></linearGradient>
        <linearGradient id="wSide" x2="0" y2="1"><stop stop-color="#2e0b80" /><stop offset=".5" stop-color="#260a70" /><stop offset="1" stop-color="#1f0852" /></linearGradient>
        <linearGradient id="wBottom"><stop stop-color="#0e0224" /><stop offset=".15" stop-color="#07021a" /><stop offset=".5" stop-color="#0b0428" /><stop offset="1" stop-color="#12023a" /></linearGradient>
        <linearGradient id="wPurple"><stop stop-color="#480d78" /><stop offset=".25" stop-color="#43096a" /><stop offset=".6" stop-color="#200548" /><stop offset="1" stop-color="#14023c" stop-opacity=".3" /></linearGradient>
      </defs>
      <rect width="2880" height="1600" fill="url(#wSide)" />
      <rect width="2880" height="48" fill="url(#wTop)" />
      <path d="M2700 1420L2880 1340V1600H2700z" fill="#200750" />
      <rect y="1592" width="2880" height="208" fill="url(#wBottom)" />
      <path d="M1130 1660L1500 1800H800L1195 1700z" fill="#11023a" opacity=".55" />
      <path d="M1300 1740h700v60h-600z" fill="#12033f" />
      <path d="M1650 1638L1880 1800H2880V1660H2595L2495 1700 2400 1638z" fill="url(#wPurple)" />
      <path d="M2595 1662L2880 1590V1700H2495z" fill="#080119" opacity=".7" />
      <g font-family="Inter" font-weight="700" font-size="23" fill="#dcd9e2" text-anchor="end">
        <text x="2859" y="904">ONE</text>
        <text x="2863" y="1160">AM</text>
        <text x="2857" y="1352">7.2</text>
      </g>
    </svg>

    <header class="menubar">
      <svg class="menubar-apple" viewBox="0 0 24 30"><use href="#apple" width="24" height="30" fill="#f1eef8" /></svg>
      <b v-fit="101">Chrome</b>
      <span v-for="m in menus" :key="m.text" v-fit="m.width">{{ m.text }}</span>
      <div class="status">
        <svg class="st-webex" viewBox="0 0 31 24" width="31" height="24"><g fill="none" stroke="#9d8bd8" stroke-width="5.600" stroke-linecap="round"><path d="M3 6q1 15 6.500 15 4.500-1 5.500-9t6-8.500" /><path d="M10.500 3q4 1 5 9t5 9q6-1 7.500-14" /><path d="M21 3.500q4-.5 6 4" /></g></svg>
        <svg class="st-bt" viewBox="0 0 18 28" width="18" height="28"><path d="M2 8l14 12-7 6V2l7 6L2 20" fill="none" stroke="#efecf7" stroke-width="2.200" /></svg>
        <svg class="st-battery" viewBox="0 0 52 24" width="52" height="24"><rect x="1" y="1" width="45" height="22" rx="6.500" fill="none" stroke="#8a76d0" stroke-width="2" /><rect x="4" y="4" width="26" height="16" rx="3.500" fill="#efecf7" /><path d="M48 8q3 1 3 4t-3 4z" fill="#8a76d0" /></svg>
        <svg class="st-wifi" viewBox="0 0 32 24" width="32" height="24"><g fill="none" stroke="#efecf7" stroke-width="3.600"><path d="M1.500 8.500q14.500-13 29 0" /><path d="M6.800 14q9.200-8.500 18.400 0" /></g><path d="M11 18.500q5-4 10 0l-5 5z" fill="#efecf7" /></svg>
        <svg class="st-search" viewBox="0 0 26 26" width="26" height="26"><circle cx="10.500" cy="10.500" r="9" fill="none" stroke="#efecf7" stroke-width="2.600" /><path d="M17 17l7 7" stroke="#efecf7" stroke-width="3.400" stroke-linecap="round" /></svg>
        <svg class="st-cc" viewBox="0 0 28 26" width="28" height="26"><rect x="1.200" y="1.200" width="25.600" height="10" rx="5" fill="none" stroke="#efecf7" stroke-width="2.200" /><circle cx="6.500" cy="6.200" r="3.300" fill="#efecf7" /><rect y="14" width="28" height="12" rx="6" fill="#efecf7" /><circle cx="22" cy="20" r="3.600" fill="#2c0b98" /></svg>
        <svg class="st-siri" viewBox="0 0 28 28" width="28" height="28"><g clip-path="url(#cSiri)"><rect width="28" height="28" fill="#2c5d8e" /><path d="M0 0h14v14L4 26H0z" fill="#a8356f" /><path d="M8 0h20v12L14 14z" fill="#2f9474" /><path d="M14 14l14-4v12z" fill="#4da6e0" /><path d="M4 28l10-14 8 14z" fill="#3554a8" /><circle cx="14" cy="14" r="4" fill="#f4f6fb" opacity=".9" /><path d="M5 8l9 4 9-3-6 5 4 9-7-7-8 3 5-5z" fill="#fff" opacity=".6" /></g></svg>
        <span v-fit="119" class="st-date">Sun Jan 9</span>
        <span v-fit="116" class="st-time">10:29 PM</span>
      </div>
    </header>

    <main class="window">
      <div class="strip">
        <div class="lights"><i class="red"></i><i class="yellow"></i><i class="green"></i></div>
        <div v-for="t in tabs" :key="t.title" class="tab" :class="{ active: t.active, last: t.last }">
          <svg class="favicon" viewBox="0 0 32 32">
            <use :href="`#${t.icon}`" width="32" height="32" />
            <text v-for="g in glyphs[t.icon]" :key="g.text" v-bind="g.attrs">{{ g.text }}</text>
          </svg>
          <div class="title"><span v-fit="t.width">{{ t.title }}</span></div>
          <svg class="close" viewBox="0 0 17 17"><path d="M1.500 1.500l14 14M15.500 1.500l-14 14" /></svg>
        </div>
        <svg class="plus" viewBox="0 0 24 24"><path d="M12 0v24M0 12h24" /></svg>
        <svg class="chevron" viewBox="0 0 20 12"><path d="M1.500 1.500l8.500 8.500 8.500-8.500" /></svg>
      </div>

      <div class="toolbar">
        <svg class="nav" viewBox="0 0 26 26"><path d="M25 13H2M13 2L2 13l11 11" /></svg>
        <svg class="nav forward" viewBox="0 0 26 26"><path d="M1 13h23M13 2l11 11-11 11" /></svg>
        <svg class="reload" viewBox="0 0 28 28"><path d="M24.500 18.500a11.500 11.500 0 1 1-1.500-11" fill="none" stroke="#f1f3f4" stroke-width="3" /><path d="M27.500 1v11.500H16z" fill="#f1f3f4" /></svg>
        <div class="omnibox">
          <svg class="info" viewBox="0 0 28 28"><circle cx="14" cy="14" r="12.500" fill="none" stroke="#9aa0a6" stroke-width="2.200" /><path d="M14 12.500v8M14 7.500v2.600" stroke="#9aa0a6" stroke-width="2.400" /></svg>
          <span v-fit="45" class="scheme">File</span>
          <i class="bar"></i>
          <span v-fit="766" class="url">file:///Users/cvasquez/RosterChallenge/output/Roster.html</span>
          <svg class="share" viewBox="0 0 24 30"><g fill="none" stroke="#bdc1c6" stroke-width="2.200"><path d="M7 11H3.500Q1.500 11 1.500 13v13q0 2 2 2h17q2 0 2-2V13q0-2-2-2H17" /><path d="M12 19V2.500M6.500 8L12 2.500 17.500 8" /></g></svg>
          <svg class="star" viewBox="0 0 30 29"><path d="M15 3l3.500 8.300 9 .8-6.800 5.900 2 8.700L15 22l-7.700 4.700 2-8.700-6.800-5.900 9-.8z" fill="none" stroke="#c8cbcf" stroke-width="2.400" /></svg>
        </div>
        <svg class="puzzle" viewBox="0 0 30 30"><path d="M3.500 6H9q-.5-6 4-6t4 6h5.500q2 0 2 2v5.500Q30 13.500 30 17.500t-5.500 4V28q0 2-2 2H17q0-6-4-6t-4 6H3.500q-2 0-2-2v-6q5.500-.5 5.500-4.500t-5.500-4.500V8q0-2 2-2z" fill="#f1f3f4" /></svg>
        <svg class="avatar" viewBox="0 0 44 44"><g clip-path="url(#cAvatar)"><rect width="44" height="44" fill="#c5272b" /><rect width="44" height="9" fill="#a98760" /><rect x="6" y="3" width="13" height="6" fill="#111" /><rect x="22" width="12" height="9" fill="#c9a77c" /><rect y="9" width="9" height="16" fill="#7a1518" /><path d="M0 24q6-2 8 4v8H0z" fill="#d8322f" /><path d="M24 10h8l-3 4h-4z" fill="#f3eeee" /><rect x="11" y="17" width="12" height="5" fill="#e8b5b3" /><rect x="25" y="17" width="7" height="4" fill="#f1d4d3" /><path d="M35 9v25M10 9v14" stroke="#4a0e10" stroke-width="1.500" /><rect x="9" y="22" width="24" height="12" fill="#f8f3e6" /><rect x="12" y="29" width="10" height="3" fill="#d9807c" /><path d="M8 34h36v10H8z" fill="#44423f" /><rect x="15" y="38" width="14" height="6" fill="#bdbcc6" /><path d="M0 34l8-6v16H0z" fill="#2d1a14" /></g></svg>
        <div class="update"><span v-fit="88">Update</span><i class="dots"></i></div>
      </div>

      <div class="bookmarks">
        <div v-for="b in bookmarks" :key="b.text" class="bookmark" :style="{ width: b.cell + 'px' }">
          <svg class="favicon" viewBox="0 0 32 32">
            <use :href="`#${b.icon}`" width="32" height="32" />
            <text v-for="g in glyphs[b.icon]" :key="g.text" v-bind="g.attrs">{{ g.text }}</text>
          </svg>
          <span v-fit="b.width">{{ b.text }}</span>
        </div>
        <span class="more">»</span>
        <i class="rule"></i>
        <svg class="list-icon" viewBox="0 0 28 28"><rect x="1.500" y="1.500" width="25" height="25" fill="none" stroke="#f1f3f4" stroke-width="3" /><path d="M6 8.500h3M6 14h3M6 19.500h3M11.500 8.500H22M11.500 14H22M11.500 19.500H22" stroke="#f1f3f4" stroke-width="2.400" /></svg>
        <span v-fit="139" class="reading">Reading List</span>
      </div>

      <section class="page">
        <h1><span v-fit="258">My Team</span></h1>
        <div class="cards">
          <article class="card">
            <div class="side manager">
              <h2>Ana</h2>
              <h3>
                <svg class="role-icon cup" viewBox="0 0 38 39"><path d="M0 15h30q8 1 8 9.500t-9 10Q28 39 22 39H8q-8 0-8-8zm29 5v9q5 0 5-4.500t-5-4.500z" fill="#fff" fill-rule="evenodd" /><path d="M7 1.500q0 3 2.500 5t2.500 5M15 1.500q0 3 2.500 5t2.500 5" fill="none" stroke="#fff" stroke-width="3.200" stroke-linecap="round" /></svg>
                <span v-fit="145">Manager</span>
              </h3>
            </div>
            <div class="info-list">
              <ul>
                <li>ID: 123</li>
                <li>Email: <a>Avasq@enron.cpom</a></li>
                <li>Office number: 2104004000</li>
              </ul>
            </div>
          </article>
          <article class="card">
            <div class="side engineer">
              <h2><span v-fit="183">Penelope</span></h2>
              <h3>
                <svg class="role-icon glasses" viewBox="0 0 42 34"><g fill="none" stroke="#fff" stroke-width="3.800" stroke-linecap="round"><path d="M12 2Q6 0 5 6L2 21M30 2q6-2 7 4l3 15" /><path d="M2 20q8-4 16 0l-1 7q-1 5-7 5t-7-4zM40 20q-8-4-16 0l1 7q1 5 7 5t7-4zM18 20h6" /></g></svg>
                <span v-fit="145">Engineer</span>
              </h3>
            </div>
            <div class="info-list">
              <ul>
                <li>ID: 124</li>
                <li>Email: <a>pvasq@enron.com</a></li>
                <li>GitHub: <a>pvasq3</a></li>
              </ul>
            </div>
          </article>
        </div>
      </section>
    </main>

    <footer class="dock">
      <template v-for="(d, i) in dock" :key="i">
        <i v-if="d.separator" class="split"></i>
        <svg v-else class="cell" viewBox="0.5 0 71 90">
          <use v-if="d.tile" :href="`#${d.icon}`" width="72" height="90" />
          <use v-else :href="`#${d.icon}`" x="9" y="15" width="54" height="54" />
          <g transform="translate(9 15)">
            <text v-for="g in glyphs[d.icon ?? '']" :key="g.text" v-bind="g.attrs">{{ g.text }}</text>
          </g>
          <circle v-if="d.dot" cx="36" cy="82" r="4" class="dot" />
          <rect v-if="d.icon === 'launchpad'" x="3" y="79" width="66" height="6.500" rx="3" class="bar-dot" />
        </svg>
      </template>
    </footer>
  </div>
</template>

<style>
html, body { margin: 0; background: #10022e; overflow: hidden; }
symbol { overflow: visible; }
</style>

<style scoped>
.paints { position: absolute; }
.sprite { display: none; }
.desktop {
  position: relative;
  width: 2880px;
  height: 1800px;
  overflow: hidden;
  font-family: Inter, "Liberation Sans", sans-serif;
  display: flex;
  flex-direction: column;
  align-items: flex-start;
}
.desktop > * { position: relative; }
.desktop > .wallpaper { position: absolute; inset: 0; width: 2880px; height: 1800px; }
i { display: block; font-style: normal; }
span, b { white-space: nowrap; }
svg:not(.sprite) { flex: none; display: block; }

.menubar {
  width: 2842px;
  height: 45px;
  margin-bottom: 5px;
  padding-right: 38px;
  display: flex;
  align-items: center;
  gap: 42px;
  font-size: 26px;
  font-weight: 500;
  color: #f1eef8;
  text-shadow: 0 2px 6px rgba(0, 0, 0, .35);
}
.menubar > * { flex: none; }
.menubar-apple { width: 26px; height: 31px; margin: -3px 0 0 40px; }
.menubar b { margin: 0 -1px 0 -2px; font-weight: 700; }
.status { margin-left: auto; display: flex; align-items: center; font-weight: 500; }
.st-webex { margin-top: 3px; }
.st-bt { margin-left: 44px; margin-top: 6px; }
.st-battery { margin-left: 40px; margin-top: 3px; }
.st-wifi { margin-left: 36px; margin-top: 1px; }
.st-search { margin-left: 39px; margin-top: 4px; }
.st-cc { margin-left: 38px; margin-top: 5px; }
.st-siri { margin-left: 34px; margin-top: 4px; }
.st-date { margin-left: 32px; }
.st-time { margin-left: 17px; }

.window {
  width: 2822px;
  height: 1610px;
  flex: none;
  box-sizing: border-box;
  border-radius: 22px;
  overflow: hidden;
  display: flex;
  flex-direction: column;
  background: #fff;
  box-shadow: 0 0 0 1.500px #050308, 0 20px 80px 10px rgba(0, 0, 0, .55);
}
.window::after {
  content: "";
  position: absolute;
  inset: 0;
  border-radius: 22px;
  pointer-events: none;
  background: linear-gradient(to top, rgba(0, 0, 0, .045), transparent 36px);
  box-shadow: inset 0 0 0 2px rgba(255, 255, 255, .3);
}
.strip {
  height: 84px;
  flex: none;
  box-sizing: border-box;
  padding-top: 16px;
  background: #202124;
  display: flex;
  align-items: center;
}
.lights { width: 187px; margin-top: -14px; flex: none; box-sizing: border-box; padding-left: 42px; display: flex; gap: 16px; }
.lights i { width: 24px; height: 24px; border-radius: 50%; }
.red { background: #ed6a5e; }
.yellow { background: #f4bf4f; }
.green { background: #61c554; }
.tab {
  position: relative;
  width: 266px;
  height: 68px;
  flex: none;
  box-sizing: border-box;
  padding-left: 23px;
  display: flex;
  align-items: center;
  font-size: 24px;
  color: #bcbfc3;
}
.tab::after { content: ""; position: absolute; right: -1px; top: 15px; width: 2px; height: 40px; background: #56585c; }
.tab.active::after, .tab.last::after { width: 16px; height: 16px; top: auto; bottom: 0; background: radial-gradient(circle at 0 0, transparent 15.500px, #35363a 16px); }
.tab.last::after { right: 3px; }
.tab.active::after { right: -16px; background: radial-gradient(circle at 100% 0, transparent 15.500px, #35363a 16px); }
.tab.last .title { width: 135px; }
.tab.active { margin-left: -3px; padding-left: 24px; border-radius: 16px 16px 0 0; background: #35363a; color: #fff; }
.favicon { width: 32px; height: 32px; }
.title {
  width: 136px;
  margin-left: 16px;
  padding-bottom: 1px;
  overflow: hidden;
  -webkit-mask-image: linear-gradient(to right, #000 74%, transparent 99%);
  mask-image: linear-gradient(to right, #000 74%, transparent 99%);
}
.title span { display: inline-block; letter-spacing: -.3px; }
.close { width: 17px; height: 17px; margin-left: 19px; fill: none; stroke: #c3c5c9; stroke-width: 2.400; }
.active .close { stroke: #fff; margin-left: 18px; }
.plus { width: 24px; height: 24px; margin-left: 32px; stroke: #c6c8cc; stroke-width: 3; }
.chevron { width: 20px; height: 12px; margin-left: 134px; fill: none; stroke: #c6c8cc; stroke-width: 2.600; }

.toolbar { height: 72px; flex: none; background: #35363a; display: flex; align-items: center; }
.nav { width: 26px; height: 26px; margin-left: 31px; fill: none; stroke: #85878b; stroke-width: 2.600; }
.nav.forward { margin-left: 38px; }
.reload { width: 28px; height: 28px; margin-left: 38px; }
.omnibox {
  width: 2269px;
  height: 56px;
  margin-left: 30px;
  box-sizing: border-box;
  border-radius: 28px;
  background: #202124;
  display: flex;
  align-items: center;
  font-size: 28px;
  color: #fff;
}
.info { width: 28px; height: 28px; margin-left: 21px; }
.scheme { margin-left: 18px; color: #9aa0a6; }
.bar { width: 2px; height: 32px; margin: 0 18px 0 17px; background: #5f6368; }
.share { width: 24px; height: 30px; margin: 0 36px 0 auto; }
.star { width: 32px; height: 31px; margin-right: 20px; }
.puzzle { width: 30px; height: 30px; margin: -4px 0 0 29px; }
.avatar { width: 44px; height: 44px; margin-left: 27px; }
.update {
  width: 176px;
  height: 56px;
  margin-left: 14px;
  box-sizing: border-box;
  padding: 0 25px 0 24px;
  border: 2.500px solid #8fcb9c;
  border-radius: 28px;
  background: #313735;
  color: #8fcb9c;
  font-size: 26px;
  font-weight: 500;
  display: flex;
  align-items: center;
  justify-content: space-between;
}
.dots { width: 6px; height: 6px; border-radius: 50%; background: #8fcb9c; box-shadow: 0 -10px #8fcb9c, 0 10px #8fcb9c; margin-right: -3px; }

.bookmarks {
  height: 66px;
  flex: none;
  box-sizing: border-box;
  padding: 0 0 8px 28px;
  border-bottom: 2px solid #56575b;
  background: #35363a;
  display: flex;
  align-items: center;
  font-size: 24px;
  color: #fff;
}
.bookmark { display: flex; align-items: center; flex: none; }
.bookmark span { margin: -1px 0 0 16px; }
.more { width: 35px; font-size: 26px; margin-top: -5px; }
.rule { width: 2px; height: 32px; margin-right: 21px; background: #5f6368; }
.list-icon { width: 29px; height: 28px; margin-right: 18px; }
.reading { margin-top: -1px; }

.page { flex: 1; padding: 20px 16px 0; font-family: "Liberation Serif", "Times New Roman", serif; background: #fff; }
h1 { margin: 0; height: 74px; line-height: 74px; font-size: 64px; color: #fff; background: #3044dd; }
.cards { padding: 96px 0 0 428px; display: flex; flex-direction: column; gap: 32px; }
.card {
  width: 560px;
  height: 704px;
  display: flex;
  background: #a7b8d1;
  box-shadow: 8px 8px 12px rgba(0, 0, 0, .56), 4px 4px 36px rgba(0, 0, 0, .13);
}
.side { flex: none; background: #3579f6; color: #fff; }
.manager { width: 162px; }
.engineer { width: 182px; }
h2 { margin: 40px 0 40px -1px; font-size: 48px; line-height: 55px; }
h3 { margin: 0 0 0 -1px; font-size: 37.400px; line-height: 43px; }
h3 span { display: block; width: max-content; }
.cup { width: 38px; height: 39px; margin: 2px 0 5px; }
.glasses { width: 42px; height: 34px; padding: 4px 0; margin-bottom: 3px; }
.info-list { flex: 1; display: flex; align-items: center; font-size: 32px; line-height: 36px; color: #000; }
ul { margin: -2px 0 0; padding: 0 50px 0 80px; list-style: none; }
li::before {
  content: "";
  display: inline-block;
  width: 10px;
  height: 10px;
  margin: 0 22px 0 -32px;
  border-radius: 50%;
  vertical-align: 4px;
  background: #000;
}
a { color: #0000ee; text-decoration: underline; }

.dock {
  width: 2770px;
  height: 90px;
  margin: 40px 0 0 55px;
  box-sizing: border-box;
  padding-left: 4.700px;
  border-radius: 26px;
  display: flex;
  background: linear-gradient(to right, #1c1233, #1f1440 25%, #24134a 48%, #27134c 57%, #4a1569 64%, #45136a 76%, #2b124f 84%, #221345);
  box-shadow: inset 0 0 0 2px rgba(255, 255, 255, .17), 0 0 0 1px rgba(0, 0, 0, .5);
}
.cell { width: 71px; height: 90px; overflow: visible; }
.dot { fill: #a78fcf; }
.bar-dot { fill: none; stroke: #8d83ab; stroke-width: 1.600; }
.split { width: 2px; height: 66px; margin: 12px 14.700px 0; background: #6a578c; }
</style>
